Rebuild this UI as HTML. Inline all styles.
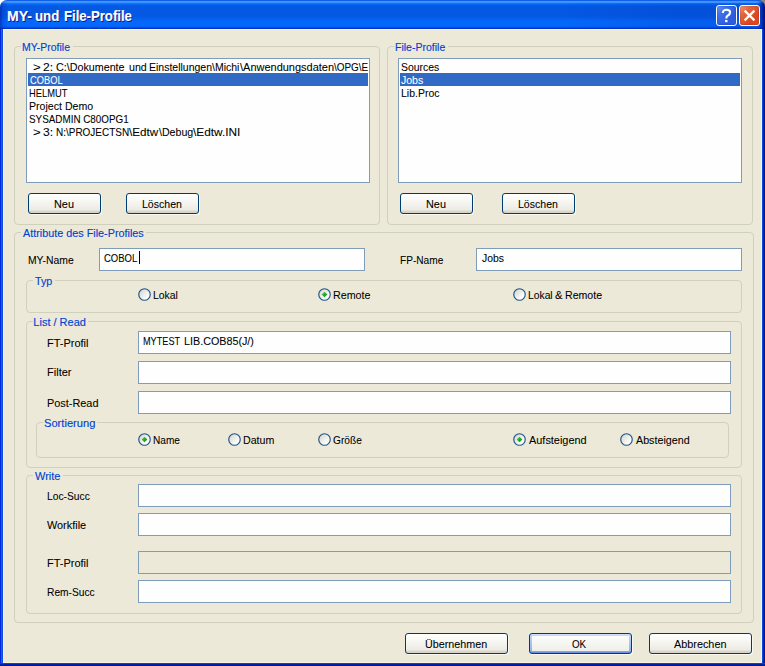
<!DOCTYPE html>
<html><head><meta charset="utf-8"><title>MY- und File-Profile</title>
<style>
html,body{margin:0;padding:0}
body{width:765px;height:666px;overflow:hidden;position:relative;background:#ece9d8;font-family:"Liberation Sans",sans-serif;font-size:11px;line-height:13px;color:#000}
div,span,i{position:absolute;box-sizing:content-box}
.t{white-space:nowrap;transform-origin:0 0;font-size:11px;line-height:13px;-webkit-text-stroke:0.07px currentColor}
.b{color:#0042d2;-webkit-text-stroke:0.14px #0042d2}
.wt{color:#fff}
.ti{font-size:14px;line-height:16px;font-weight:bold;text-shadow:1px 1px 0 #0a1883;-webkit-text-stroke:0.1px #fff}
.g{border:1px solid #d0d0bf;border-radius:4px}
.gl{background:#ece9d8}
.f{border:1px solid #7f9db9;background:#fdfefd}
.f.dis{background:#ece9d8}
.sel{background:#316ac5}
.btn{border:1px solid #003c74;border-radius:3px;box-shadow:1px 1px 0 rgba(255,255,255,.65);background:linear-gradient(180deg,#ffffff 0%,#fbfbf9 20%,#f3f2ec 55%,#ecebe5 82%,#dcd7cb 92%,#d4cfc3 100%)}
.btn.def{background:linear-gradient(180deg,#cfe1fd,#bdd3f8) 0 0/100% 2px no-repeat,linear-gradient(180deg,#8fb0f0,#6486de) 0 100%/100% 2px no-repeat,linear-gradient(180deg,#c4d9fb,#8cacee) 0 0/2px 100% no-repeat,linear-gradient(180deg,#c4d9fb,#8cacee) 100% 0/2px 100% no-repeat,linear-gradient(180deg,#ffffff 0%,#f8f8f5 30%,#f0f0ea 85%,#e9e8e0 100%)}
#tb{left:0;top:0;width:765px;height:29px;background:linear-gradient(180deg,#0245d8 0px,#1f7af5 1px,#3d96ff 1.5px,#3a93ff 2.5px,#0b72fa 3.5px,#0467f4 4.5px,#045ce6 5.5px,#0458e2 6.5px,#0458e2 16px,#0460ee 19px,#0468fc 21px,#0468fc 26px,#035ae8 27.2px,#0136c9 28.3px,#0030c4 29px)}
#tbw{left:0;top:0;width:765px;height:29px;overflow:hidden;border-radius:7px 7px 0 0}
#tbm{left:560px;top:3px;width:205px;height:25px;background:linear-gradient(90deg,rgba(0,40,170,0) 0,rgba(0,40,170,.16) 120px,rgba(0,40,170,.16) 205px)}
#tbl{left:0;top:0;width:8px;height:29px;background:linear-gradient(90deg,rgba(0,20,150,.55) 0,rgba(0,40,190,.25) 3px,rgba(0,40,190,0) 8px)}
#tbr{left:757px;top:0;width:8px;height:29px;background:linear-gradient(90deg,rgba(0,20,150,0) 0,rgba(0,25,160,.3) 3px,rgba(0,15,130,.75) 6px,rgba(0,10,120,.9) 8px)}
#bl{left:0;top:29px;width:3px;height:637px;background:linear-gradient(90deg,#0428d8 0,#0428d8 1px,#1264ea 1px,#1264ea 2px,#0850e0 2px)}
#br{left:762px;top:29px;width:3px;height:637px;background:linear-gradient(90deg,#0a4ae0 0,#0a4ae0 1px,#0426bc 1px,#0426bc 2px,#00168c 2px)}
#bb{left:0;top:663px;width:765px;height:3px;background:linear-gradient(180deg,#0540e0 0,#0540e0 1px,#0020a8 1px,#0020a8 2px,#001890 2px)}
.hl{background:#faf4dc}
.cb{width:19px;height:19px;border:1px solid #fff;border-radius:3px}
#bq{left:716px;top:5px;background:linear-gradient(135deg,#7096f4 0%,#3f70e8 30%,#2c5cdd 70%,#3263e2 100%);box-shadow:inset 0 0 2px rgba(10,30,140,.6)}
#bx{left:739px;top:5px;background:linear-gradient(135deg,#f09878 0%,#e4643e 30%,#d8461e 70%,#e05222 100%);box-shadow:inset 0 0 2px rgba(130,30,0,.55)}
svg{position:absolute;left:0;top:0}
</style></head><body>
<svg width="0" height="0" style="left:-10px;top:-10px"><defs>
<linearGradient id="gr" x1="0" y1="0" x2="1" y2="1"><stop offset="0" stop-color="#d2d1ca"/><stop offset=".45" stop-color="#ecece7"/><stop offset=".8" stop-color="#ffffff"/></linearGradient>
<linearGradient id="gd" x1="0" y1="0" x2="1" y2="1"><stop offset="0" stop-color="#62dc62"/><stop offset=".5" stop-color="#25ab25"/><stop offset="1" stop-color="#128a12"/></linearGradient>
</defs></svg>

<div style="left:0;top:0;width:8px;height:8px;background:#fff"></div><div style="left:757px;top:0;width:8px;height:8px;background:#86857e"></div>
<div id="tbw"><div id="tb"></div><div id="tbm"></div><div id="tbl"></div><div id="tbr"></div></div>
<div class="hl" style="left:3px;top:29px;width:759px;height:1px"></div>
<div class="hl" style="left:3px;top:29px;width:1px;height:634px"></div>
<div class="hl" style="left:761px;top:29px;width:1px;height:634px"></div>
<div class="hl" style="left:3px;top:662px;width:759px;height:1px"></div>
<div id="bl"></div><div id="br"></div><div id="bb"></div>
<span class="t wt ti" id="ti_a" style="left:6.61px;top:8.00px;transform:scaleX(1.0036);">MY-</span>
<span class="t wt ti" id="ti_b" style="left:35.23px;top:8.00px;transform:scaleX(0.9445);">und</span>
<span class="t wt ti" id="ti_c" style="left:64.40px;top:8.00px;transform:scaleX(0.9380);">File-Profile</span>
<div class="cb" id="bq"><svg width="19" height="19" viewBox="0 0 19 19"><path d="M5.9 6.9 C5.9 4.6 7.4 3.8 9.5 3.8 C11.7 3.8 13.1 4.9 13.1 6.5 C13.1 8.1 12 8.8 10.7 9.7 C9.7 10.4 9.3 11 9.3 12.5" fill="none" stroke="#fff" stroke-width="2.1" stroke-linecap="butt"/><rect x="8.1" y="13.9" width="2.4" height="2.3" fill="#fff"/></svg></div>
<div class="cb" id="bx"><svg width="19" height="19" viewBox="0 0 19 19"><path d="M4.6 4.6 L14.4 14.4 M14.4 4.6 L4.6 14.4" fill="none" stroke="#fff" stroke-width="2.2" stroke-linecap="butt"/></svg></div>
<div class="g" style="left:14px;top:46px;width:364px;height:177px"></div>
<div class="gl" style="left:21px;top:44px;width:52px;height:5px"></div>
<span class="t b" id="g_my" style="left:21.52px;top:41.00px;transform:scaleX(0.9535);">MY-Profile</span>
<div class="f " style="left:26px;top:58px;width:342px;height:123px"></div>
<div class="sel" style="left:28px;top:73px;width:340px;height:13px"></div>
<div style="left:28px;top:60px;width:340px;height:121px;overflow:hidden">
<span class="t " id="l_1a" style="left:4.66px;top:1.00px;transform:scaleX(1.2052);">&gt;</span>
<span class="t " id="l_1b" style="left:15.47px;top:1.00px;transform:scaleX(1.0978);">2:</span>
<span class="t " id="l_1c" style="left:28.28px;top:1.00px;transform:scaleX(0.9751);">C:\Dokumente</span>
<span class="t " id="l_1d" style="left:101.41px;top:1.00px;transform:scaleX(0.9685);">und</span>
<span class="t " id="l_1e" style="left:120.60px;top:1.00px;transform:scaleX(0.9541);">Einstellungen\Michi</span>
<span class="t " id="l_1f" style="left:212.38px;top:1.00px;transform:scaleX(0.9986);">\Anwendungsdaten</span>
<span class="t " id="l_1g" style="left:305.80px;top:1.00px;transform:scaleX(0.9026);">\OPG\E</span>
</div>
<span class="t wt" id="l_2" style="left:30.42px;top:74.00px;transform:scaleX(0.8460);">COBOL</span>
<span class="t " id="l_3" style="left:29.10px;top:87.00px;transform:scaleX(0.8484);">HELMUT</span>
<span class="t " id="l_4" style="left:28.51px;top:100.00px;transform:scaleX(0.9627);">Project Demo</span>
<span class="t " id="l_5" style="left:28.62px;top:113.00px;transform:scaleX(0.8963);">SYSADMIN C80OPG1</span>
<span class="t " id="l_6a" style="left:33.34px;top:126.00px;transform:scaleX(1.2017);">&gt;</span>
<span class="t " id="l_6b" style="left:43.30px;top:126.00px;transform:scaleX(1.0996);">3:</span>
<span class="t " id="l_6c" style="left:56.19px;top:126.00px;transform:scaleX(0.9064);">N:\PROJECTSN</span>
<span class="t " id="l_6d" style="left:129.41px;top:126.00px;transform:scaleX(1.0605);">\Edtw</span>
<span class="t " id="l_6e" style="left:159.33px;top:126.00px;transform:scaleX(0.9655);">\Debug</span>
<span class="t " id="l_6f" style="left:193.38px;top:126.00px;transform:scaleX(1.0736);">\Edtw.INI</span>
<div class="btn " style="left:28px;top:193px;width:71px;height:19px"></div>
<span class="t " id="b_neu1" style="left:54.13px;top:198.00px;transform:scaleX(0.9886);">Neu</span>
<div class="btn " style="left:126px;top:193px;width:71px;height:19px"></div>
<span class="t " id="b_del1" style="left:142.15px;top:198.00px;transform:scaleX(0.9584);">L&ouml;schen</span>
<div class="g" style="left:387px;top:46px;width:364px;height:177px"></div>
<div class="gl" style="left:394px;top:44px;width:54px;height:5px"></div>
<span class="t b" id="g_fp" style="left:394.52px;top:41.00px;transform:scaleX(0.9560);">File-Profile</span>
<div class="f " style="left:398px;top:58px;width:342px;height:123px"></div>
<div class="sel" style="left:400px;top:73px;width:340px;height:13px"></div>
<span class="t " id="f_1" style="left:401.34px;top:61.00px;transform:scaleX(0.9475);">Sources</span>
<span class="t wt" id="f_2" style="left:401.16px;top:74.00px;transform:scaleX(0.9575);">Jobs</span>
<span class="t " id="f_3" style="left:401.14px;top:87.00px;transform:scaleX(0.9527);">Lib.Proc</span>
<div class="btn " style="left:400px;top:193px;width:71px;height:19px"></div>
<span class="t " id="b_neu2" style="left:426.13px;top:198.00px;transform:scaleX(0.9886);">Neu</span>
<div class="btn " style="left:502px;top:193px;width:71px;height:19px"></div>
<span class="t " id="b_del2" style="left:517.69px;top:198.00px;transform:scaleX(0.9584);">L&ouml;schen</span>
<div class="g" style="left:14px;top:232px;width:738px;height:389px"></div>
<div class="gl" style="left:21px;top:230px;width:125px;height:5px"></div>
<span class="t b" id="g_attr" style="left:23.44px;top:227.00px;transform:scaleX(0.9827);">Attribute des File-Profiles</span>
<span class="t " id="lb_my" style="left:27.90px;top:254.00px;transform:scaleX(0.9411);">MY-Name</span>
<div class="f " style="left:99px;top:248px;width:264px;height:21px"></div>
<span class="t " id="v_my" style="left:103.58px;top:252.00px;transform:scaleX(0.8647);">COBOL</span>
<div style="left:139px;top:251px;width:1px;height:13px;background:#000"></div>
<span class="t " id="lb_fp" style="left:399.50px;top:254.00px;transform:scaleX(0.9193);">FP-Name</span>
<div class="f " style="left:476px;top:248px;width:264px;height:21px"></div>
<span class="t " id="v_fp" style="left:481.92px;top:252.00px;transform:scaleX(0.9438);">Jobs</span>
<div class="g" style="left:26px;top:280px;width:714px;height:31px"></div>
<div class="gl" style="left:33px;top:278px;width:22px;height:5px"></div>
<span class="t b" id="g_typ" style="left:35.40px;top:275.00px;transform:scaleX(0.9729);">Typ</span>
<svg style="left:138px;top:288px" width="13" height="13" viewBox="0 0 13 13"><circle cx="6.5" cy="6.5" r="5.75" fill="url(#gr)" stroke="#1f5588" stroke-width="1.15"/></svg>
<span class="t " id="r_lokal" style="left:152.84px;top:289.00px;transform:scaleX(0.9459);">Lokal</span>
<svg style="left:318px;top:288px" width="13" height="13" viewBox="0 0 13 13"><circle cx="6.5" cy="6.5" r="5.75" fill="url(#gr)" stroke="#1f5588" stroke-width="1.15"/><path d="M6.5 3.7 L9.3 6.5 L6.5 9.3 L3.7 6.5 Z" fill="url(#gd)"/></svg>
<span class="t " id="r_remote" style="left:332.85px;top:289.00px;transform:scaleX(0.9709);">Remote</span>
<svg style="left:513px;top:288px" width="13" height="13" viewBox="0 0 13 13"><circle cx="6.5" cy="6.5" r="5.75" fill="url(#gr)" stroke="#1f5588" stroke-width="1.15"/></svg>
<span class="t " id="r_lra" style="left:527.92px;top:289.00px;transform:scaleX(0.9377);">Lokal</span>
<span class="t " id="r_lrb" style="left:555.24px;top:289.00px;transform:scaleX(1.0210);">&amp;</span>
<span class="t " id="r_lrc" style="left:564.51px;top:289.00px;transform:scaleX(0.9629);">Remote</span>
<div class="g" style="left:26px;top:321px;width:714px;height:145px"></div>
<div class="gl" style="left:33px;top:319px;width:55px;height:5px"></div>
<span class="t b" id="g_lr" style="left:33.34px;top:316.00px;">List / Read</span>
<span class="t " id="lb_ft" style="left:47.34px;top:337.00px;transform:scaleX(0.9981);">FT-Profil</span>
<div class="f " style="left:138px;top:331px;width:591px;height:21px"></div>
<span class="t " id="v_fta" style="left:142.82px;top:335.00px;transform:scaleX(0.8310);">MYTEST</span>
<span class="t " id="v_ftb" style="left:184.44px;top:335.00px;transform:scaleX(0.9779);">LIB.COB85(J/)</span>
<span class="t " id="lb_fi" style="left:46.66px;top:366.00px;transform:scaleX(1.0022);">Filter</span>
<div class="f " style="left:138px;top:361px;width:591px;height:21px"></div>
<span class="t " id="lb_pr" style="left:46.67px;top:397.00px;transform:scaleX(0.9902);">Post-Read</span>
<div class="f " style="left:138px;top:391px;width:591px;height:21px"></div>
<div class="g" style="left:36px;top:422px;width:691px;height:34px"></div>
<div class="gl" style="left:43px;top:420px;width:54px;height:5px"></div>
<span class="t b" id="g_so" style="left:43.76px;top:417.00px;transform:scaleX(1.0119);">Sortierung</span>
<svg style="left:138px;top:433px" width="13" height="13" viewBox="0 0 13 13"><circle cx="6.5" cy="6.5" r="5.75" fill="url(#gr)" stroke="#1f5588" stroke-width="1.15"/><path d="M6.5 3.7 L9.3 6.5 L6.5 9.3 L3.7 6.5 Z" fill="url(#gd)"/></svg>
<span class="t " id="r_name" style="left:153.30px;top:434.00px;transform:scaleX(0.9181);">Name</span>
<svg style="left:228px;top:433px" width="13" height="13" viewBox="0 0 13 13"><circle cx="6.5" cy="6.5" r="5.75" fill="url(#gr)" stroke="#1f5588" stroke-width="1.15"/></svg>
<span class="t " id="r_datum" style="left:243.47px;top:434.00px;transform:scaleX(0.9674);">Datum</span>
<svg style="left:318px;top:433px" width="13" height="13" viewBox="0 0 13 13"><circle cx="6.5" cy="6.5" r="5.75" fill="url(#gr)" stroke="#1f5588" stroke-width="1.15"/></svg>
<span class="t " id="r_gr" style="left:333.38px;top:434.00px;transform:scaleX(0.9236);">Gr&ouml;&szlig;e</span>
<svg style="left:513px;top:433px" width="13" height="13" viewBox="0 0 13 13"><circle cx="6.5" cy="6.5" r="5.75" fill="url(#gr)" stroke="#1f5588" stroke-width="1.15"/><path d="M6.5 3.7 L9.3 6.5 L6.5 9.3 L3.7 6.5 Z" fill="url(#gd)"/></svg>
<span class="t " id="r_auf" style="left:529.44px;top:434.00px;transform:scaleX(0.9921);">Aufsteigend</span>
<svg style="left:620px;top:433px" width="13" height="13" viewBox="0 0 13 13"><circle cx="6.5" cy="6.5" r="5.75" fill="url(#gr)" stroke="#1f5588" stroke-width="1.15"/></svg>
<span class="t " id="r_ab" style="left:636.44px;top:434.00px;transform:scaleX(0.9742);">Absteigend</span>
<div class="g" style="left:26px;top:475px;width:714px;height:137px"></div>
<div class="gl" style="left:33px;top:473px;width:30px;height:5px"></div>
<span class="t b" id="g_wr" style="left:34.82px;top:470.00px;transform:scaleX(0.9990);">Write</span>
<span class="t " id="lb_ls" style="left:46.64px;top:490.00px;transform:scaleX(0.9328);">Loc-Succ</span>
<div class="f " style="left:138px;top:484px;width:591px;height:21px"></div>
<span class="t " id="lb_wf" style="left:46.58px;top:519.00px;transform:scaleX(0.9891);">Workfile</span>
<div class="f " style="left:138px;top:513px;width:591px;height:21px"></div>
<span class="t " id="lb_ft2" style="left:47.34px;top:557.00px;transform:scaleX(0.9981);">FT-Profil</span>
<div class="f dis" style="left:138px;top:551px;width:591px;height:21px"></div>
<span class="t " id="lb_rs" style="left:46.64px;top:586.00px;transform:scaleX(0.9284);">Rem-Succ</span>
<div class="f " style="left:138px;top:580px;width:591px;height:21px"></div>
<div class="btn " style="left:405px;top:633px;width:101px;height:19px"></div>
<span class="t " id="b_ueb" style="left:424.71px;top:638.00px;transform:scaleX(0.9767);">&Uuml;bernehmen</span>
<div class="btn def" style="left:529px;top:633px;width:101px;height:19px"></div>
<span class="t " id="b_ok" style="left:571.90px;top:638.00px;transform:scaleX(0.8890);">OK</span>
<div class="btn " style="left:649px;top:633px;width:101px;height:19px"></div>
<span class="t " id="b_abb" style="left:674.44px;top:638.00px;transform:scaleX(0.9856);">Abbrechen</span>
</body></html>
